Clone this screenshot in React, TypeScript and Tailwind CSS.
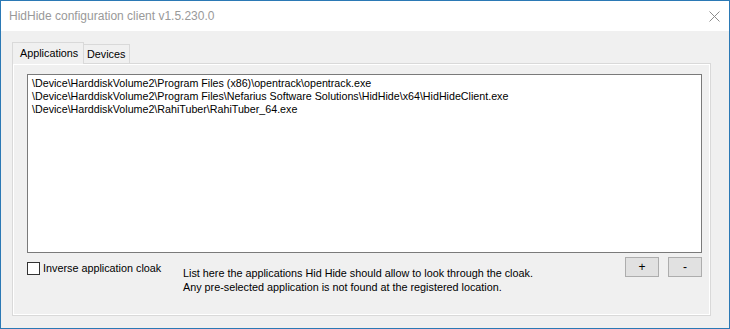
import React from "react";

// ─── Data ─────────────────────────────────────────────────────────────────────

const APPLICATIONS = [
  "\\Device\\HarddiskVolume2\\Program Files (x86)\\opentrack\\opentrack.exe",
  "\\Device\\HarddiskVolume2\\Program Files\\Nefarius Software Solutions\\HidHide\\x64\\HidHideClient.exe",
  "\\Device\\HarddiskVolume2\\RahiTuber\\RahiTuber_64.exe",
];

const FONT = { fontFamily: '"Liberation Sans", Arial, sans-serif' };

// ─── Small pieces ─────────────────────────────────────────────────────────────

function SmallButton({ label }: { label: string }) {
  return (
    <button
      type="button"
      className="flex h-[20px] w-[34px] items-center justify-center border border-[#adadad] bg-[#e1e1e1] text-[12px] leading-none text-black"
    >
      {label}
    </button>
  );
}

// ─── Component ────────────────────────────────────────────────────────────────

export default function App() {
  return (
    <div
      className="flex h-[329px] w-[730px] flex-col overflow-hidden border border-[#2b79b5] bg-[#f0f0f0] text-black"
      style={FONT}
    >
      {/* ── Title bar ── */}
      <div className="flex h-[30px] shrink-0 items-center justify-between bg-white pl-[8px] pr-[9px]">
        <span className="whitespace-nowrap text-[12px] text-[#999999]">
          HidHide configuration client v1.5.230.0
        </span>
        <svg className="h-[11px] w-[11px]" viewBox="0 0 11 11">
          <path d="M0.5 0.5 10.5 10.5M10.5 0.5 0.5 10.5" stroke="#8c8c8c" strokeWidth={1} />
        </svg>
      </div>

      {/* ── Tab control ── */}
      <div className="flex h-[297px] flex-col pl-[11px] pr-[18px] pt-[11px] pb-[12px]">
        {/* Tab headers */}
        <div className="relative z-10 flex h-[21px] shrink-0 items-end text-[10.8px]">
          <div className="-mb-px flex h-[22px] w-[72px] items-center border border-b-0 border-[#d9d9d9] bg-[#f0f0f0] pl-[7px]">
            Applications
          </div>
          <div className="flex h-[19px] w-[46px] items-center border border-b-0 border-l-0 border-[#d9d9d9] bg-[#f0f0f0] pl-[3px]">
            Devices
          </div>
        </div>

        {/* Tab page */}
        <div className="flex h-[253px] flex-col border border-[#d9d9d9]">
          <div className="flex flex-1 flex-col border border-white pl-[13px] pr-[7px] pt-[9px]">
            {/* List box */}
            <div className="h-[179px] shrink-0 border border-[#7a7a7a] bg-white pl-[4px] pt-[1.5px] text-[10.7px]">
              {APPLICATIONS.map((app) => (
                <div key={app} className="h-[13px] whitespace-nowrap leading-[13px]">
                  {app}
                </div>
              ))}
            </div>

            {/* Bottom row */}
            <div className="mt-[4px] flex items-start text-[10.8px]">
              <label className="mt-[5px] flex w-[156px] items-center gap-[3px] leading-[13px]">
                <span className="h-[13px] w-[13px] border border-[#333333] bg-white" />
                Inverse application cloak
              </label>
              <div className="mt-[10px] flex-1 leading-[13.5px]">
                <div>List here the applications Hid Hide should allow to look through the cloak.</div>
                <div>Any pre-selected application is not found at the registered location.</div>
              </div>
              <div className="flex gap-[9px]">
                <SmallButton label="+" />
                <SmallButton label="-" />
              </div>
            </div>
          </div>
        </div>
      </div>
    </div>
  );
}
